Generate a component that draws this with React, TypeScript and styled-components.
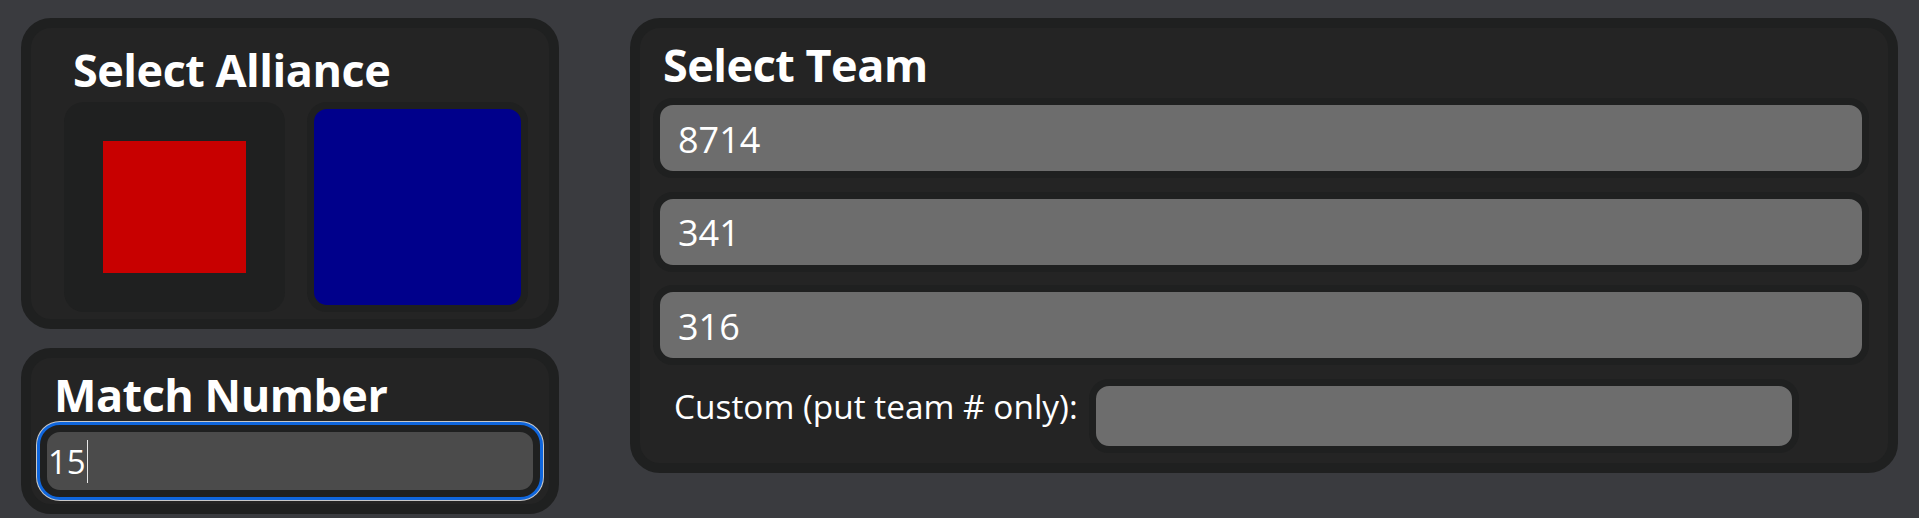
import styled, { createGlobalStyle } from 'styled-components';

const GlobalStyle = createGlobalStyle`
  html, body {
    margin: 0;
    padding: 0;
    background: #3a3b3f;
  }
  body {
    font-family: 'Open Sans', 'Noto Sans', sans-serif;
    color: #ffffff;
  }
  * {
    box-sizing: border-box;
  }
`;

const Page = styled.div`
  display: flex;
  align-items: flex-start;
  gap: 71px;
  width: 1919px;
  height: 518px;
  padding: 18px 21px;
`;

const LeftColumn = styled.div`
  display: flex;
  flex-direction: column;
  gap: 19px;
  width: 538px;
  flex-shrink: 0;
`;

const Card = styled.section`
  background: #242424;
  border: 10px solid #1f2020;
  border-radius: 30px;
`;

const AllianceCard = styled(Card)`
  display: flex;
  flex-direction: column;
  height: 311px;
  padding: 0 21px 7px 33px;
`;

const MatchCard = styled(Card)`
  height: 166px;
  padding: 0 9px 7px;
`;

const TeamCard = styled(Card)`
  display: flex;
  flex-direction: column;
  flex: 1;
  height: 455px;
  padding: 0 19px 0 13px;
`;

const Heading = styled.h2<{ $indent: number; $top: number; $bottom?: number }>`
  margin: 0 0 ${(p) => p.$bottom ?? 0}px;
  padding: ${(p) => p.$top}px 0 0 ${(p) => p.$indent}px;
  font-size: 45px;
  font-weight: 700;
  letter-spacing: -0.5px;
  line-height: 64px;
`;

const AllianceRow = styled.div`
  display: flex;
  gap: 22px;
`;

const AllianceButton = styled.button<{ $color: string; $selected?: boolean }>`
  width: 221px;
  height: 210px;
  padding: 0;
  background: ${(p) => p.$color};
  border: ${(p) => (p.$selected ? 39 : 7)}px solid #1f2020;
  border-radius: 20px;
  cursor: pointer;
`;

const MatchField = styled.div`
  position: relative;
`;

const MatchInput = styled.input`
  display: block;
  width: 100%;
  height: 72px;
  padding: 0 1px;
  border: 7px solid #1f2020;
  border-radius: 20px;
  background: #4b4b4b;
  color: #ffffff;
  font: 400 33px 'Open Sans', 'Noto Sans', sans-serif;
  outline: none;
  box-shadow: 0 0 0 3px #0f66dd, 0 0 0 4px #c8c8c8;
  caret-color: transparent;
`;

/* static caret drawn over the field, placed after an invisible copy of the value */
const CaretLayer = styled.div`
  position: absolute;
  inset: 0 0 0 8px;
  display: flex;
  align-items: center;
  pointer-events: none;
  font: 400 33px 'Open Sans', 'Noto Sans', sans-serif;
  color: transparent;
`;

const Caret = styled.span`
  width: 1px;
  height: 43px;
  margin-left: 1px;
  background: #e8e8e8;
`;

const TeamList = styled.div`
  display: flex;
  flex-direction: column;
  gap: 13.5px;
`;

const TeamOption = styled.button`
  width: 100%;
  height: 80px;
  padding: 2px 0 0 18px;
  border: 7px solid #1f2020;
  border-radius: 20px;
  background: #6d6d6d;
  color: #ffffff;
  font: 400 36px 'Open Sans', 'Noto Sans', sans-serif;
  text-align: left;
  cursor: pointer;
`;

const CustomRow = styled.div`
  display: flex;
  align-items: flex-start;
  gap: 11px;
  margin-top: 14px;
  padding-left: 21px;
`;

const CustomLabel = styled.label`
  padding-top: 4px;
  font-size: 33.4px;
  white-space: nowrap;
`;

const CustomInput = styled.input`
  width: 710px;
  height: 74px;
  padding: 0 12px;
  border: 7px solid #1f2020;
  border-radius: 20px;
  background: #6d6d6d;
  color: #ffffff;
  font: 400 34px 'Open Sans', 'Noto Sans', sans-serif;
  outline: none;
`;

const teams = ['8714', '341', '316'];
const matchNumber = '15';

export default function App() {
  return (
    <>
      <GlobalStyle />
      <Page>
        <LeftColumn>
          <AllianceCard>
            <Heading $indent={9} $top={10}>
              Select Alliance
            </Heading>
            <AllianceRow>
              <AllianceButton $color="#c80000" $selected aria-label="Red alliance" />
              <AllianceButton $color="#00008b" aria-label="Blue alliance" />
            </AllianceRow>
          </AllianceCard>
          <MatchCard>
            <Heading $indent={14} $top={5} $bottom={-2}>
              Match Number
            </Heading>
            <MatchField>
              <MatchInput defaultValue={matchNumber} autoFocus />
              <CaretLayer aria-hidden>
                {matchNumber}
                <Caret />
              </CaretLayer>
            </MatchField>
          </MatchCard>
        </LeftColumn>
        <TeamCard>
          <Heading $indent={10} $top={5} $bottom={1}>
            Select Team
          </Heading>
          <TeamList>
            {teams.map((team) => (
              <TeamOption key={team}>{team}</TeamOption>
            ))}
          </TeamList>
          <CustomRow>
            <CustomLabel htmlFor="custom-team">Custom (put team # only):</CustomLabel>
            <CustomInput id="custom-team" />
          </CustomRow>
        </TeamCard>
      </Page>
    </>
  );
}
